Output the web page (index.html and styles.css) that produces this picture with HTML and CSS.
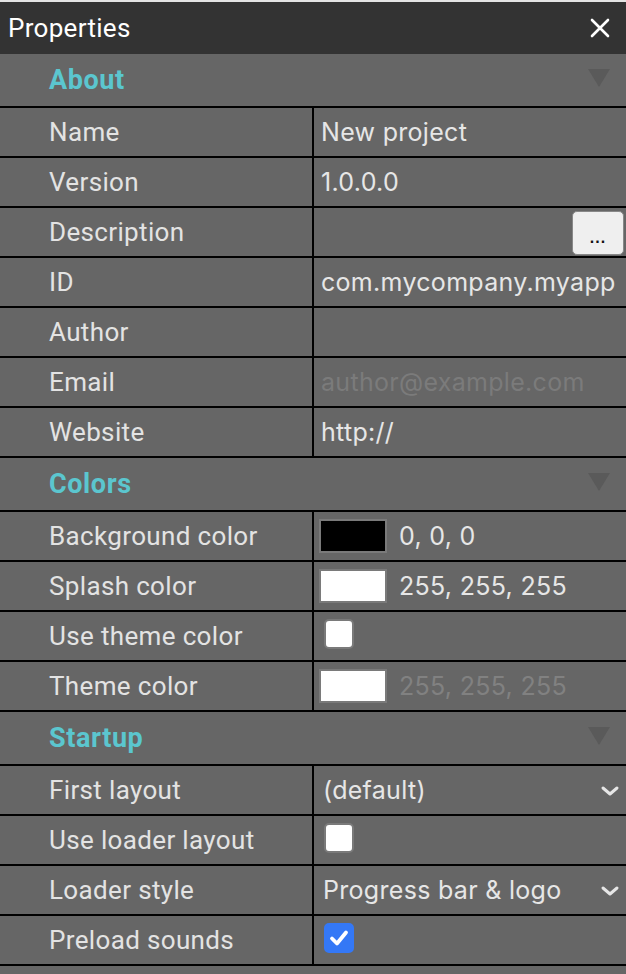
FILE: index.html
```html
<!DOCTYPE html>
<html lang="en">
<head>
    <meta charset="UTF-8">
    <title>Properties</title>
    <link rel="stylesheet" href="styles.css">
</head>
<body>
    <div class="panel">
        <header class="titlebar">
            <span class="title">Properties</span>
            <svg class="close" width="22" height="22" viewBox="0 0 22 22">
                <path d="M3 3 L19 19 M19 3 L3 19" stroke="#fff" stroke-width="2.6" stroke-linecap="round"/>
            </svg>
        </header>

        <!-- About -->
        <div class="section-head">
            <span>About</span>
            <span class="arrow"></span>
        </div>
        <div class="row"><div class="label">Name</div><div class="value">New project</div></div>
        <div class="row"><div class="label">Version</div><div class="value">1.0.0.0</div></div>
        <div class="row">
            <div class="label">Description</div>
            <div class="value value-btn"><button class="dots">...</button></div>
        </div>
        <div class="row"><div class="label">ID</div><div class="value">com.mycompany.myapp</div></div>
        <div class="row"><div class="label">Author</div><div class="value"></div></div>
        <div class="row"><div class="label">Email</div><div class="value placeholder">author@example.com</div></div>
        <div class="row"><div class="label">Website</div><div class="value">http://</div></div>

        <!-- Colors -->
        <div class="section-head">
            <span>Colors</span>
            <span class="arrow"></span>
        </div>
        <div class="row">
            <div class="label">Background color</div>
            <div class="value color"><span class="swatch black"></span>0, 0, 0</div>
        </div>
        <div class="row">
            <div class="label">Splash color</div>
            <div class="value color"><span class="swatch"></span>255, 255, 255</div>
        </div>
        <div class="row">
            <div class="label">Use theme color</div>
            <div class="value"><span class="check"></span></div>
        </div>
        <div class="row">
            <div class="label">Theme color</div>
            <div class="value color disabled"><span class="swatch"></span>255, 255, 255</div>
        </div>

        <!-- Startup -->
        <div class="section-head">
            <span>Startup</span>
            <span class="arrow"></span>
        </div>
        <div class="row">
            <div class="label">First layout</div>
            <div class="value select">(default)
                <svg class="chevron" width="20" height="12" viewBox="0 0 20 12"><path d="M3 3 L10 9 L17 3" fill="none" stroke="#e6e6e6" stroke-width="3" stroke-linecap="round" stroke-linejoin="round"/></svg>
            </div>
        </div>
        <div class="row">
            <div class="label">Use loader layout</div>
            <div class="value"><span class="check"></span></div>
        </div>
        <div class="row">
            <div class="label">Loader style</div>
            <div class="value select">Progress bar &amp; logo
                <svg class="chevron" width="20" height="12" viewBox="0 0 20 12"><path d="M3 3 L10 9 L17 3" fill="none" stroke="#e6e6e6" stroke-width="3" stroke-linecap="round" stroke-linejoin="round"/></svg>
            </div>
        </div>
        <div class="row">
            <div class="label">Preload sounds</div>
            <div class="value">
                <span class="check checked">
                    <svg width="20" height="18" viewBox="0 0 20 18"><path d="M3 9.5 L8 14.5 L17 3.5" fill="none" stroke="#fff" stroke-width="3.8" stroke-linecap="round" stroke-linejoin="round"/></svg>
                </span>
            </div>
        </div>
    </div>
</body>
</html>
```

FILE: styles.css
```css
/* Estilos generales */
body {
    margin: 0;
    padding: 0;
    background-color: #666;
    font-family: Roboto, "Liberation Sans", sans-serif;
    color: #e3e3e3;
}

.panel {
    border-top: 2px solid #e4e4e4;
}

/* Barra de titulo */
.titlebar {
    height: 52px;
    background-color: #333;
    display: flex;
    align-items: center;
    justify-content: space-between;
    padding: 0 15px 0 8px;
}

.title {
    color: #fff;
    font-size: 26px;
    letter-spacing: 0.3px;
}

/* Cabecera de seccion */
.section-head {
    height: 52px;
    border-bottom: 2px solid #000;
    display: flex;
    align-items: center;
    justify-content: space-between;
    padding: 0 16px 0 49px;
    font-size: 27px;
    font-weight: bold;
    letter-spacing: 0.6px;
    color: #5bc6cf;
}

.arrow {
    width: 0;
    height: 0;
    border-left: 11px solid transparent;
    border-right: 11px solid transparent;
    border-top: 18px solid #5a5a5a;
    margin-top: -4px;
}

/* Filas */
.row {
    height: 48px;
    border-bottom: 2px solid #000;
    display: flex;
}

.label {
    width: 314px;
    box-sizing: border-box;
    border-right: 2px solid #000;
    padding-left: 49px;
    display: flex;
    align-items: center;
    font-size: 26px;
    letter-spacing: 0.35px;
}

.value {
    flex: 1;
    display: flex;
    align-items: center;
    padding-left: 7px;
    font-family: Inter, "Noto Sans", sans-serif;
    font-size: 25px;
    letter-spacing: 0.3px;
    color: #e6e6e6;
}

.placeholder {
    color: #7b7b7b;
}

.value-btn {
    justify-content: flex-end;
    padding-right: 2px;
}

.dots {
    width: 52px;
    height: 44px;
    margin-top: 1px;
    background-color: #efefef;
    border: 1px solid #888;
    border-radius: 5px;
    color: #111;
    font-size: 16px;
    font-weight: bold;
    padding: 10px 0 0 0;
    letter-spacing: 1px;
}

/* Colores */
.swatch {
    width: 64px;
    height: 30px;
    background-color: #fff;
    border: 2px solid #7a7a7a;
    margin-left: -2px;
    margin-right: 12px;
}

.swatch.black {
    background-color: #000;
}

.disabled {
    color: #818181;
}

/* Checkbox */
.check {
    width: 26px;
    height: 26px;
    background-color: #fff;
    border: 2px solid #7a7a7a;
    border-radius: 5px;
    margin-left: 3px;
    margin-top: -4px;
    display: flex;
    align-items: center;
    justify-content: center;
}

.check.checked {
    background-color: #3478f6;
    border-color: #3478f6;
}

/* Select */
.select {
    justify-content: space-between;
    padding-right: 6px;
    padding-left: 9px;
}

.chevron {
    margin-top: 2px;
}
```
